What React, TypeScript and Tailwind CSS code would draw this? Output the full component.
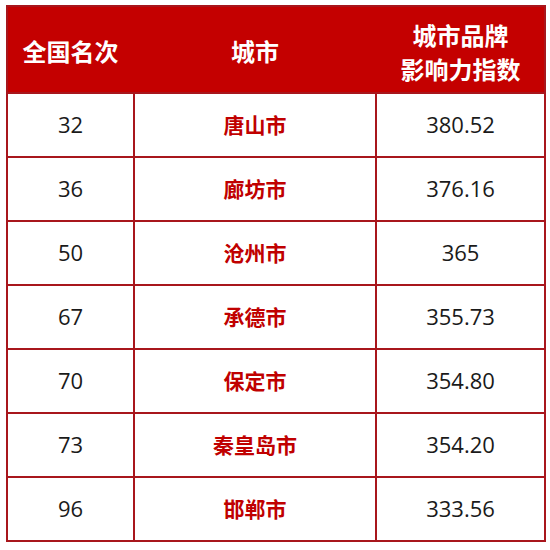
import React from "react";

const rows: [string, string, string][] = [
  ["32", "唐山市", "380.52"],
  ["36", "廊坊市", "376.16"],
  ["50", "沧州市", "365"],
  ["67", "承德市", "355.73"],
  ["70", "保定市", "354.80"],
  ["73", "秦皇岛市", "354.20"],
  ["96", "邯郸市", "333.56"],
];

export default function App() {
  return (
    <div className="w-[550px] h-[550px] bg-white pt-[5px] pl-[6px] font-['Open_Sans','Noto_Sans_CJK_SC',sans-serif]">
      <div className="w-[540px] border-2 border-[#a8161c] flex flex-col">
        <div className="h-[85px] bg-[#c40000] grid grid-cols-[125px_244px_167px] text-white font-bold text-[24px] items-center text-center font-['Noto_Sans_CJK_SC',sans-serif]">
          <div className="pt-[2px]">全国名次</div>
          <div className="pt-[2px]">城市</div>
          <div className="leading-[34px] pt-[4px]">
            <div>城市品牌</div>
            <div>影响力指数</div>
          </div>
        </div>
        {rows.map(([rank, city, score]) => (
          <div key={rank} className="h-[64px] border-t-2 border-[#a8161c] grid grid-cols-[125px_242px_169px] text-center">
            <div className="flex items-center justify-center pb-[2px] text-[22px] text-[#1a1a1a]">{rank}</div>
            <div className="flex items-center justify-center border-l-2 border-[#a8161c] text-[21px] font-bold text-[#c00000] font-['Noto_Sans_CJK_SC',sans-serif]">{city}</div>
            <div className="flex items-center justify-center pb-[2px] border-l-2 border-[#a8161c] text-[22px] text-[#1a1a1a]">{score}</div>
          </div>
        ))}
      </div>
    </div>
  );
}
